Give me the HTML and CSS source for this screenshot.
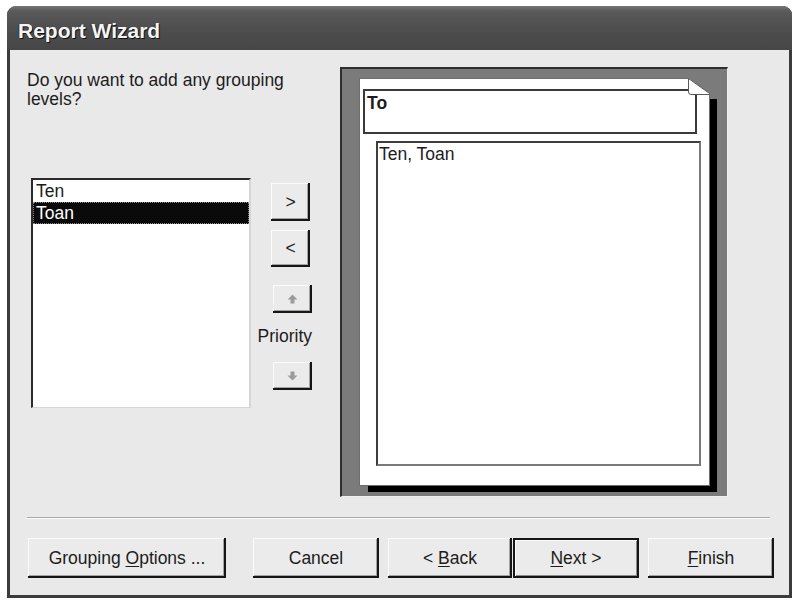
FILE: index.html
```html
<!DOCTYPE html>
<html lang="en">
<head>
<meta charset="utf-8">
<title>Report Wizard</title>
<link rel="stylesheet" href="styles.css">
</head>
<body>
<div class="window">
  <div class="titlebar"><span class="title">Report Wizard</span></div>
  <div class="client">
    <div class="main">
      <div class="left">
        <p class="question">Do you want to add any grouping levels?</p>
        <div class="picker">
          <ul class="listbox">
            <li class="item">Ten</li>
            <li class="item selected">Toan</li>
          </ul>
          <div class="movers">
            <button class="btn move"><span>&gt;</span></button>
            <button class="btn move"><span>&lt;</span></button>
            <button class="btn prio up" disabled>
              <svg width="11" height="10" viewBox="0 0 11 10"><path d="M5.5 0.5 L10.5 5.5 H7.5 V9.5 H3.5 V5.5 H0.5 Z" fill="#9c9c9c"/></svg>
            </button>
            <span class="prio-label">Priority</span>
            <button class="btn prio down" disabled>
              <svg width="11" height="10" viewBox="0 0 11 10"><path d="M5.5 9.5 L10.5 4.5 H7.5 V0.5 H3.5 V4.5 H0.5 Z" fill="#9c9c9c"/></svg>
            </button>
          </div>
        </div>
      </div>
      <div class="preview">
        <div class="page">
          <svg class="fold" width="22" height="18" viewBox="0 0 22 18">
            <path d="M0 0 H22 V16 Z" fill="#7b7b7b"/>
            <path d="M0.5 0.5 L21.5 15.5 L21.5 16.5 L3 16.5 Q0.5 16.5 0.5 14 Z" fill="#fff" stroke="#5a5a5a" stroke-width="1"/>
          </svg>
          <div class="group-header">To</div>
          <div class="detail">Ten, Toan</div>
        </div>
      </div>
    </div>
    <div class="separator"></div>
    <div class="buttons">
      <button class="btn action wide"><span>Grouping <u>O</u>ptions ...</span></button>
      <button class="btn action cancel"><span>Cancel</span></button>
      <button class="btn action back"><span>&lt; <u>B</u>ack</span></button>
      <button class="btn action next default"><span><u>N</u>ext &gt;</span></button>
      <button class="btn action finish"><span><u>F</u>inish</span></button>
    </div>
  </div>
</div>
</body>
</html>
```
FILE: styles.css
```css
* { box-sizing: border-box; }
html, body { margin: 0; background: #fff; }
body {
  font-family: "Liberation Sans", Arial, sans-serif;
  font-size: 17.5px;
  color: #1c1c1c;
  width: 796px;
  height: 604px;
  overflow: hidden;
}

.window {
  width: 785px;
  height: 592px;
  margin: 6px 0 0 7px;
  display: flex;
  flex-direction: column;
  background: #3b3b3b;
  border-radius: 9px 9px 0 0;
}

.titlebar {
  height: 44px;
  flex: none;
  padding: 5px 0 0 11px;
  display: flex;
  align-items: center;
  border-radius: 9px 9px 0 0;
  background: linear-gradient(#767676, #5a5a5a 5px, #4e4e4e 50%, #464646);
}
.title {
  font-weight: bold;
  font-size: 21px;
  color: #f4f4f4;
  text-shadow: 1px 1px 0 #111, -1px 0 0 #333;
}

.client {
  flex: 1;
  margin: 0 3px 3px;
  background: #e9e9e9;
  padding: 17px 0 0 17px;
  display: flex;
  flex-direction: column;
}

.main { display: flex; height: 430px; flex: none; }
.left { width: 313px; flex: none; }
.question { margin: 4px 0 0; line-height: 19px; width: 290px; }

.picker { display: flex; margin: 69px 0 0 4px; }
.listbox {
  list-style: none;
  margin: 0;
  padding: 0;
  width: 220px;
  height: 230px;
  background: #fff;
  border-style: solid;
  border-width: 2px 2px 1px 2px;
  border-color: #2b2b2b #d6d6d6 #d6d6d6 #2b2b2b;
}
.item { height: 22px; line-height: 22px; padding-left: 3px; }
.item.selected {
  background: #0a0a0a;
  color: #fff;
  outline: 1px dotted #8a8a8a;
  outline-offset: -1px;
}

.movers {
  width: 54px;
  margin-left: 7px;
  padding-top: 5px;
  display: flex;
  flex-direction: column;
  align-items: flex-end;
}

.btn {
  font: inherit;
  color: inherit;
  padding: 0;
  border: 0;
  background: #ebebeb;
  box-shadow: inset -2px -2px 0 #151515, inset 1px 1px 0 #fbfbfb, inset -3px -3px 0 #a3a3a3;
  display: flex;
  align-items: center;
  justify-content: center;
}
.btn span { white-space: pre; }
.btn u { text-decoration-thickness: 1px; text-underline-offset: 2px; }

.move { width: 39px; height: 38px; margin-right: 2px; }
.move + .move { margin-top: 9px; height: 37px; }
.prio { width: 39px; height: 28px; }
.up { margin-top: 18px; }
.prio-label { margin-top: 13px; line-height: 20px; }
.down { margin-top: 16px; }

.preview {
  position: relative;
  z-index: 0;
  width: 388px;
  height: 430px;
  background: #7b7b7b;
  border-style: solid;
  border-width: 2px 1px 1px 2px;
  border-color: #2e2e2e #efefef #efefef #2e2e2e;
  padding: 9px 0 0 17px;
}
.page {
  position: relative;
  width: 351px;
  height: 408px;
  background: #fff;
  border: 1px solid #6e6e6e;
  padding: 10px 0 0 3px;
}
.page::before {
  content: "";
  position: absolute;
  left: 8px;
  top: 20px;
  right: -8px;
  bottom: -7px;
  background: #000;
  z-index: -1;
}
.fold { position: absolute; top: -1px; right: -1px; }

.group-header {
  width: 334px;
  height: 45px;
  border: 2px solid #3a3a3a;
  padding: 2px 0 0 2px;
  font-weight: bold;
  line-height: 20px;
}
.detail {
  width: 325px;
  height: 325px;
  margin: 7px 0 0 13px;
  border: 2px solid #7a7a7a;
  border-top-color: #3e3e3e;
  border-left-color: #3e3e3e;
  padding: 1px 0 0 1px;
  line-height: 20px;
}

.separator {
  width: 743px;
  margin-top: 20px;
  border-top: 1px solid #a9a9a9;
  border-bottom: 1px solid #fcfcfc;
}

.buttons { display: flex; margin: 19px 0 0 1px; }
.action { height: 40px; width: 126px; }
.wide { width: 198px; }
.cancel { margin-left: 27px; }
.back { margin-left: 9px; width: 124px; }
.next { margin-left: 1px; }
.finish { margin-left: 9px; }
.default {
  border: 2px solid #151515;
  box-shadow: inset 1px 1px 0 #fbfbfb, inset -1px -1px 0 #8a8a8a;
}
```
